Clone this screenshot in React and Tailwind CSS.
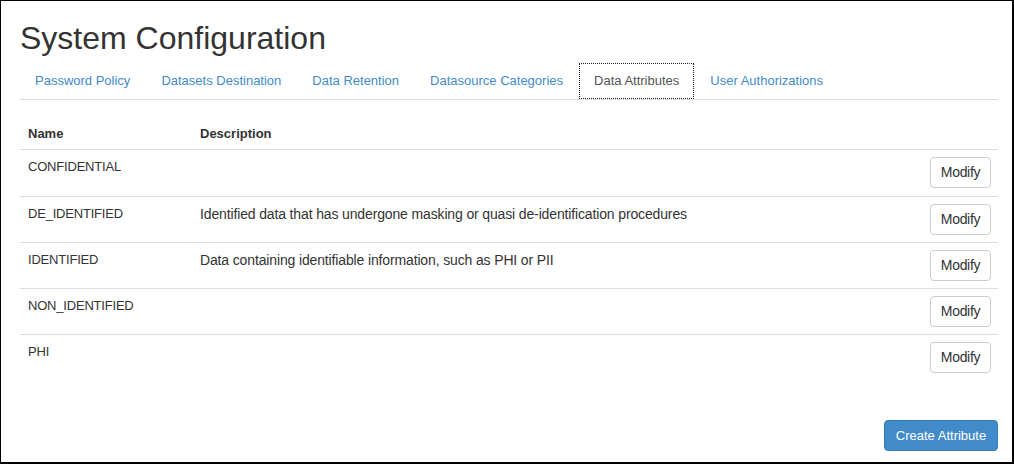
const tabs = [
  "Password Policy",
  "Datasets Destination",
  "Data Retention",
  "Datasource Categories",
  "Data Attributes",
  "User Authorizations",
]

const attributes = [
  { name: "CONFIDENTIAL", description: "" },
  { name: "DE_IDENTIFIED", description: "Identified data that has undergone masking or quasi de-identification procedures" },
  { name: "IDENTIFIED", description: "Data containing identifiable information, such as PHI or PII" },
  { name: "NON_IDENTIFIED", description: "" },
  { name: "PHI", description: "" },
]

export default function App() {
  const active = "Data Attributes"

  return (
    <div
      className="w-[1014px] h-[464px] box-border bg-white border-l border-t border-r-2 border-b-2 border-black text-[#333] flex flex-col pl-[19px] pr-[14px]"
      style={{ fontFamily: '"Liberation Sans", Arial, sans-serif' }}
    >
      {/* Title */}
      <h1 className="mt-[19px] text-[32px] leading-[36px] font-normal text-[#333]">System Configuration</h1>

      {/* Tabs */}
      <ul className="mt-[7px] flex border-b border-[#ddd]">
        {tabs.map((t) => (
          <li key={t} className="mr-[1px]">
            <a
              className={`block h-[36px] px-[14px] leading-[34px] text-[13px] border ${
                t === active ? "border-dotted border-[#222] text-[#555]" : "border-transparent text-[#428bca]"
              }`}
            >
              {t}
            </a>
          </li>
        ))}
      </ul>

      {/* Table */}
      <div className="mt-[14px]">
        <div className="flex h-[36px] pt-[10px] leading-[20px] border-b border-[#ddd] font-bold text-[13px]">
          <div className="w-[172px] pl-[8px]">Name</div>
          <div className="flex-1 pl-[8px]">Description</div>
        </div>
        {attributes.map((a, i) => (
          <div key={a.name} className={`flex h-[46px] ${i > 0 ? "border-t border-[#ddd]" : ""}`}>
            <div className="w-[172px] pl-[8px] pt-[7px] leading-[20px] text-[13px] tracking-[-0.2px]">{a.name}</div>
            <div className="flex-1 pl-[8px] pt-[7px] leading-[20px] text-[14px] tracking-[-0.14px]">{a.description}</div>
            <div className="pr-[7px] pt-[7px]">
              <button className="w-[61px] h-[31px] rounded-[4px] border border-[#ccc] bg-white text-[14px] tracking-[-0.3px] text-[#333]">
                Modify
              </button>
            </div>
          </div>
        ))}
      </div>

      {/* Footer action */}
      <div className="mt-auto mb-[11px] flex justify-end">
        <button className="w-[114px] h-[31px] rounded-[4px] border border-[#357ebd] bg-[#428bca] text-white text-[13px]">
          Create Attribute
        </button>
      </div>
    </div>
  )
}
